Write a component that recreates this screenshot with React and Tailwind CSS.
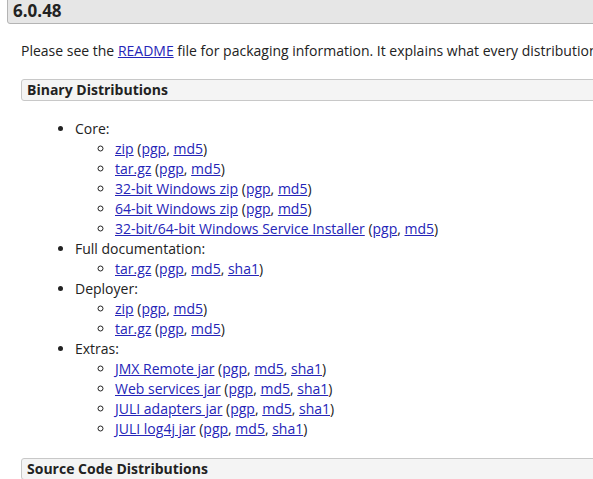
import React from "react";

const L = ({ children }) => (
  <a href="#" className="text-[#2525b8] underline">{children}</a>
);

const Sums = ({ sha }) => (
  <>
    {" ("}
    <L>pgp</L>, <L>md5</L>
    {sha ? <>, <L>sha1</L></> : null}
    {")"}
  </>
);

const Item = ({ name, sha }) => (
  <li>
    <L>{name}</L>
    <Sums sha={sha} />
  </li>
);

export default function App() {
  return (
    <div className="bg-white min-h-[479px] overflow-hidden text-[#222] text-[14px] leading-[20px]" style={{ fontFamily: '"Open Sans", sans-serif' }}>
      <div className="pl-[7px]">
        <div className="-mt-[10px] h-[34px] w-[640px] bg-[#e6e6e6] border border-[#b4b4b4] rounded-[3px] px-[5px] pt-[9px] text-[17px] leading-[22px] font-bold text-[#222]">
          6.0.48
        </div>
        <div className="pl-[14px]">
          <p className="mt-[17px] whitespace-nowrap">
            Please see the <L>README</L> file for packaging information. It explains what every distribution contains.
          </p>
          <div className="mt-[18px] h-[22px] w-[620px] bg-[#f4f4f4] border border-[#c8c8c8] rounded-[3px] px-[5px] font-bold leading-[19px]">
            Binary Distributions
          </div>
          <div className="pl-[14px] mt-[18px]">
            <ul className="list-disc pl-[40px]">
              <li>
                Core:
                <ul className="list-[circle] pl-[40px]">
                  <Item name="zip" />
                  <Item name="tar.gz" />
                  <Item name="32-bit Windows zip" />
                  <Item name="64-bit Windows zip" />
                  <Item name="32-bit/64-bit Windows Service Installer" />
                </ul>
              </li>
              <li>
                Full documentation:
                <ul className="list-[circle] pl-[40px]">
                  <Item name="tar.gz" sha />
                </ul>
              </li>
              <li>
                Deployer:
                <ul className="list-[circle] pl-[40px]">
                  <Item name="zip" />
                  <Item name="tar.gz" />
                </ul>
              </li>
              <li>
                Extras:
                <ul className="list-[circle] pl-[40px]">
                  <Item name="JMX Remote jar" sha />
                  <Item name="Web services jar" sha />
                  <Item name="JULI adapters jar" sha />
                  <Item name="JULI log4j jar" sha />
                </ul>
              </li>
            </ul>
          </div>
          <div className="mt-[19px] h-[22px] w-[620px] bg-[#f4f4f4] border border-[#c8c8c8] rounded-[3px] px-[5px] font-bold leading-[19px]">
            Source Code Distributions
          </div>
        </div>
      </div>
    </div>
  );
}
